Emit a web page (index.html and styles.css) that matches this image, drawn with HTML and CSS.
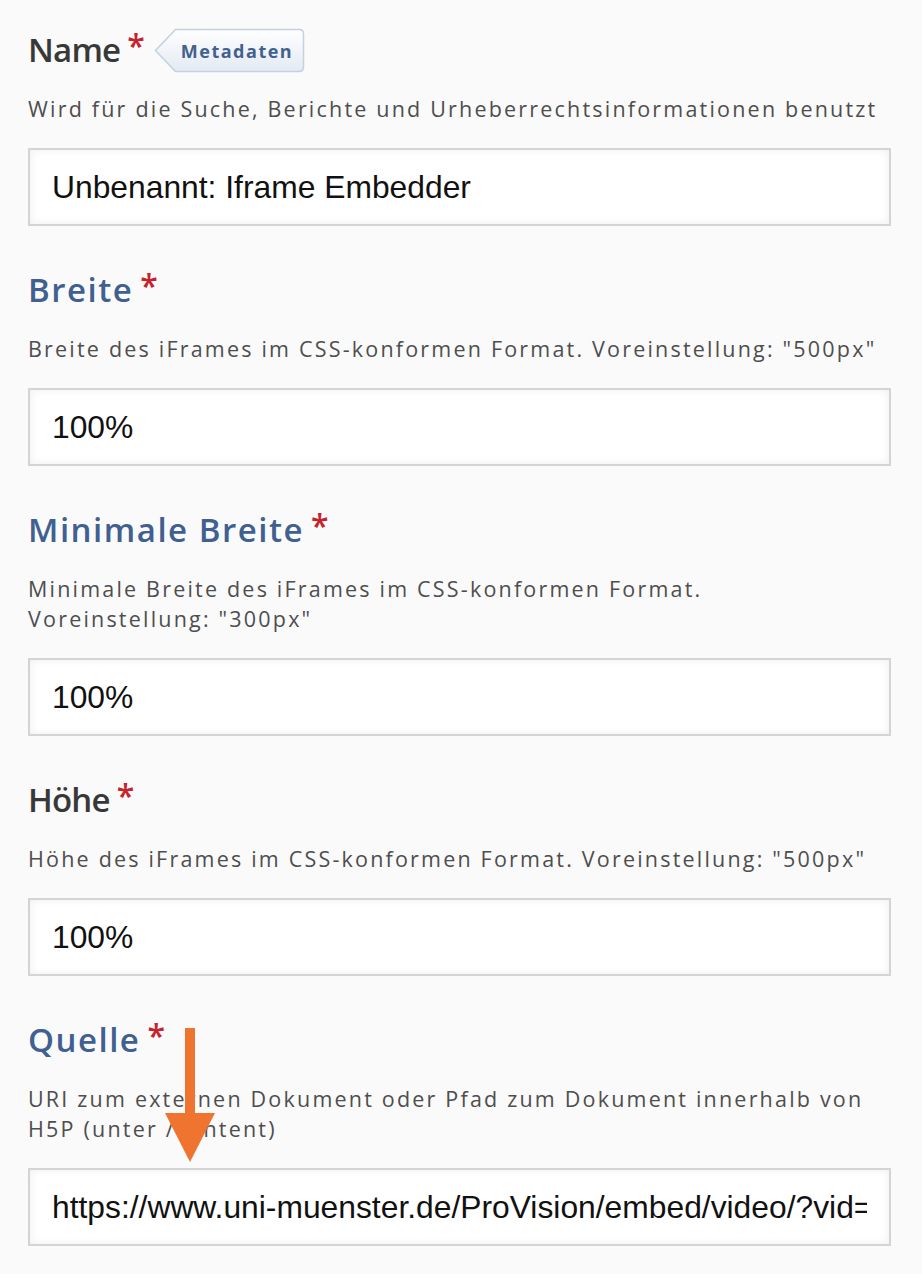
FILE: index.html
```html
<!DOCTYPE html>
<html lang="de">
<head>
<meta charset="utf-8">
<title>Iframe Embedder</title>
<link rel="stylesheet" href="styles.css">
</head>
<body>
<main class="form">
  <section class="field">
    <div class="label-row">
      <h2 class="label dark">Name</h2><span class="req">*</span>
      <span class="meta">
        <svg class="meta-bg" viewBox="0 0 151 45" preserveAspectRatio="none" aria-hidden="true">
          <defs>
            <linearGradient id="mg" x1="0" y1="0" x2="0" y2="1">
              <stop offset="0" stop-color="#ffffff"/>
              <stop offset="1" stop-color="#e3eaf3"/>
            </linearGradient>
          </defs>
          <path d="M1.5 22.5 L21.5 1.5 H145 Q149.5 1.5 149.5 6 V39 Q149.5 43.5 145 43.5 H21.5 Z" fill="url(#mg)" stroke="#c3d1e2" stroke-width="1.5"/>
        </svg>
        <span class="meta-text">Metadaten</span>
      </span>
    </div>
    <p class="desc">Wird für die Suche, Berichte und Urheberrechtsinformationen benutzt</p>
    <input class="text" type="text" value="Unbenannt: Iframe Embedder" readonly>
  </section>

  <section class="field">
    <div class="label-row">
      <h2 class="label blue">Breite</h2><span class="req">*</span>
    </div>
    <p class="desc">Breite des iFrames im CSS-konformen Format. Voreinstellung: "500px"</p>
    <input class="text" type="text" value="100%" readonly>
  </section>

  <section class="field">
    <div class="label-row">
      <h2 class="label blue">Minimale Breite</h2><span class="req">*</span>
    </div>
    <p class="desc">Minimale Breite des iFrames im CSS-konformen Format.<br>Voreinstellung: "300px"</p>
    <input class="text" type="text" value="100%" readonly>
  </section>

  <section class="field">
    <div class="label-row">
      <h2 class="label dark">Höhe</h2><span class="req">*</span>
    </div>
    <p class="desc">Höhe des iFrames im CSS-konformen Format. Voreinstellung: "500px"</p>
    <input class="text" type="text" value="100%" readonly>
  </section>

  <section class="field last">
    <div class="label-row">
      <h2 class="label blue">Quelle</h2><span class="req">*</span>
    </div>
    <p class="desc">URI zum externen Dokument oder Pfad zum Dokument innerhalb von<br>H5P (unter /content)</p>
    <input class="text" type="text" value="https://www.uni-muenster.de/ProVision/embed/video/?vid=" readonly>
    <svg class="arrow" width="50" height="134" viewBox="0 0 50 134" aria-hidden="true">
      <rect x="20" y="0" width="10" height="88" fill="#ef7430"/>
      <polygon points="0,85 50,85 25,134" fill="#ef7430"/>
    </svg>
  </section>
</main>
</body>
</html>
```

FILE: styles.css
```css
html, body {
  margin: 0;
  padding: 0;
  background: #fafafa;
}

.form {
  padding: 30px 31px 0 28px;
  font-family: "Open Sans", "Noto Sans", sans-serif;
}

.field {
  display: flex;
  flex-direction: column;
  margin-bottom: 44px;
}

.field.last {
  position: relative;
}

.label-row {
  display: flex;
  align-items: flex-start;
  height: 40px;
}

.label {
  margin: 0;
  font-size: 33px;
  line-height: 40px;
  font-weight: 600;
}

.label.dark {
  color: #383838;
  letter-spacing: -0.8px;
}

.label.blue {
  color: #3f6090;
  letter-spacing: 1.5px;
}

.req {
  color: #c6222b;
  font-size: 32px;
  line-height: 32px;
  font-weight: 600;
  margin-left: 7px;
  margin-top: 0;
}

.meta {
  position: relative;
  display: inline-flex;
  align-items: center;
  width: 151px;
  height: 45px;
  margin: -2px 0 0 9px;
  box-sizing: border-box;
  padding-left: 27px;
}

.meta-bg {
  position: absolute;
  left: 0;
  top: 0;
  width: 151px;
  height: 45px;
}

.meta-text {
  position: relative;
  font-size: 18px;
  font-weight: 700;
  color: #41618f;
  letter-spacing: 1.5px;
}

.desc {
  margin: 24px 0 24px 0;
  font-size: 21.5px;
  line-height: 30px;
  letter-spacing: 2.2px;
  color: #4e4e4e;
}

.text {
  display: block;
  box-sizing: border-box;
  width: 100%;
  height: 78px;
  margin: 0;
  padding: 0 22px;
  border: 2px solid #d4d4d4;
  background: #ffffff;
  box-shadow: inset 0 0 8px rgba(0, 0, 0, 0.07);
  font-family: "Liberation Sans", Arial, sans-serif;
  font-size: 31.8px;
  color: #111111;
  outline: none;
}

.arrow {
  position: absolute;
  left: 137px;
  top: 8px;
}
```
